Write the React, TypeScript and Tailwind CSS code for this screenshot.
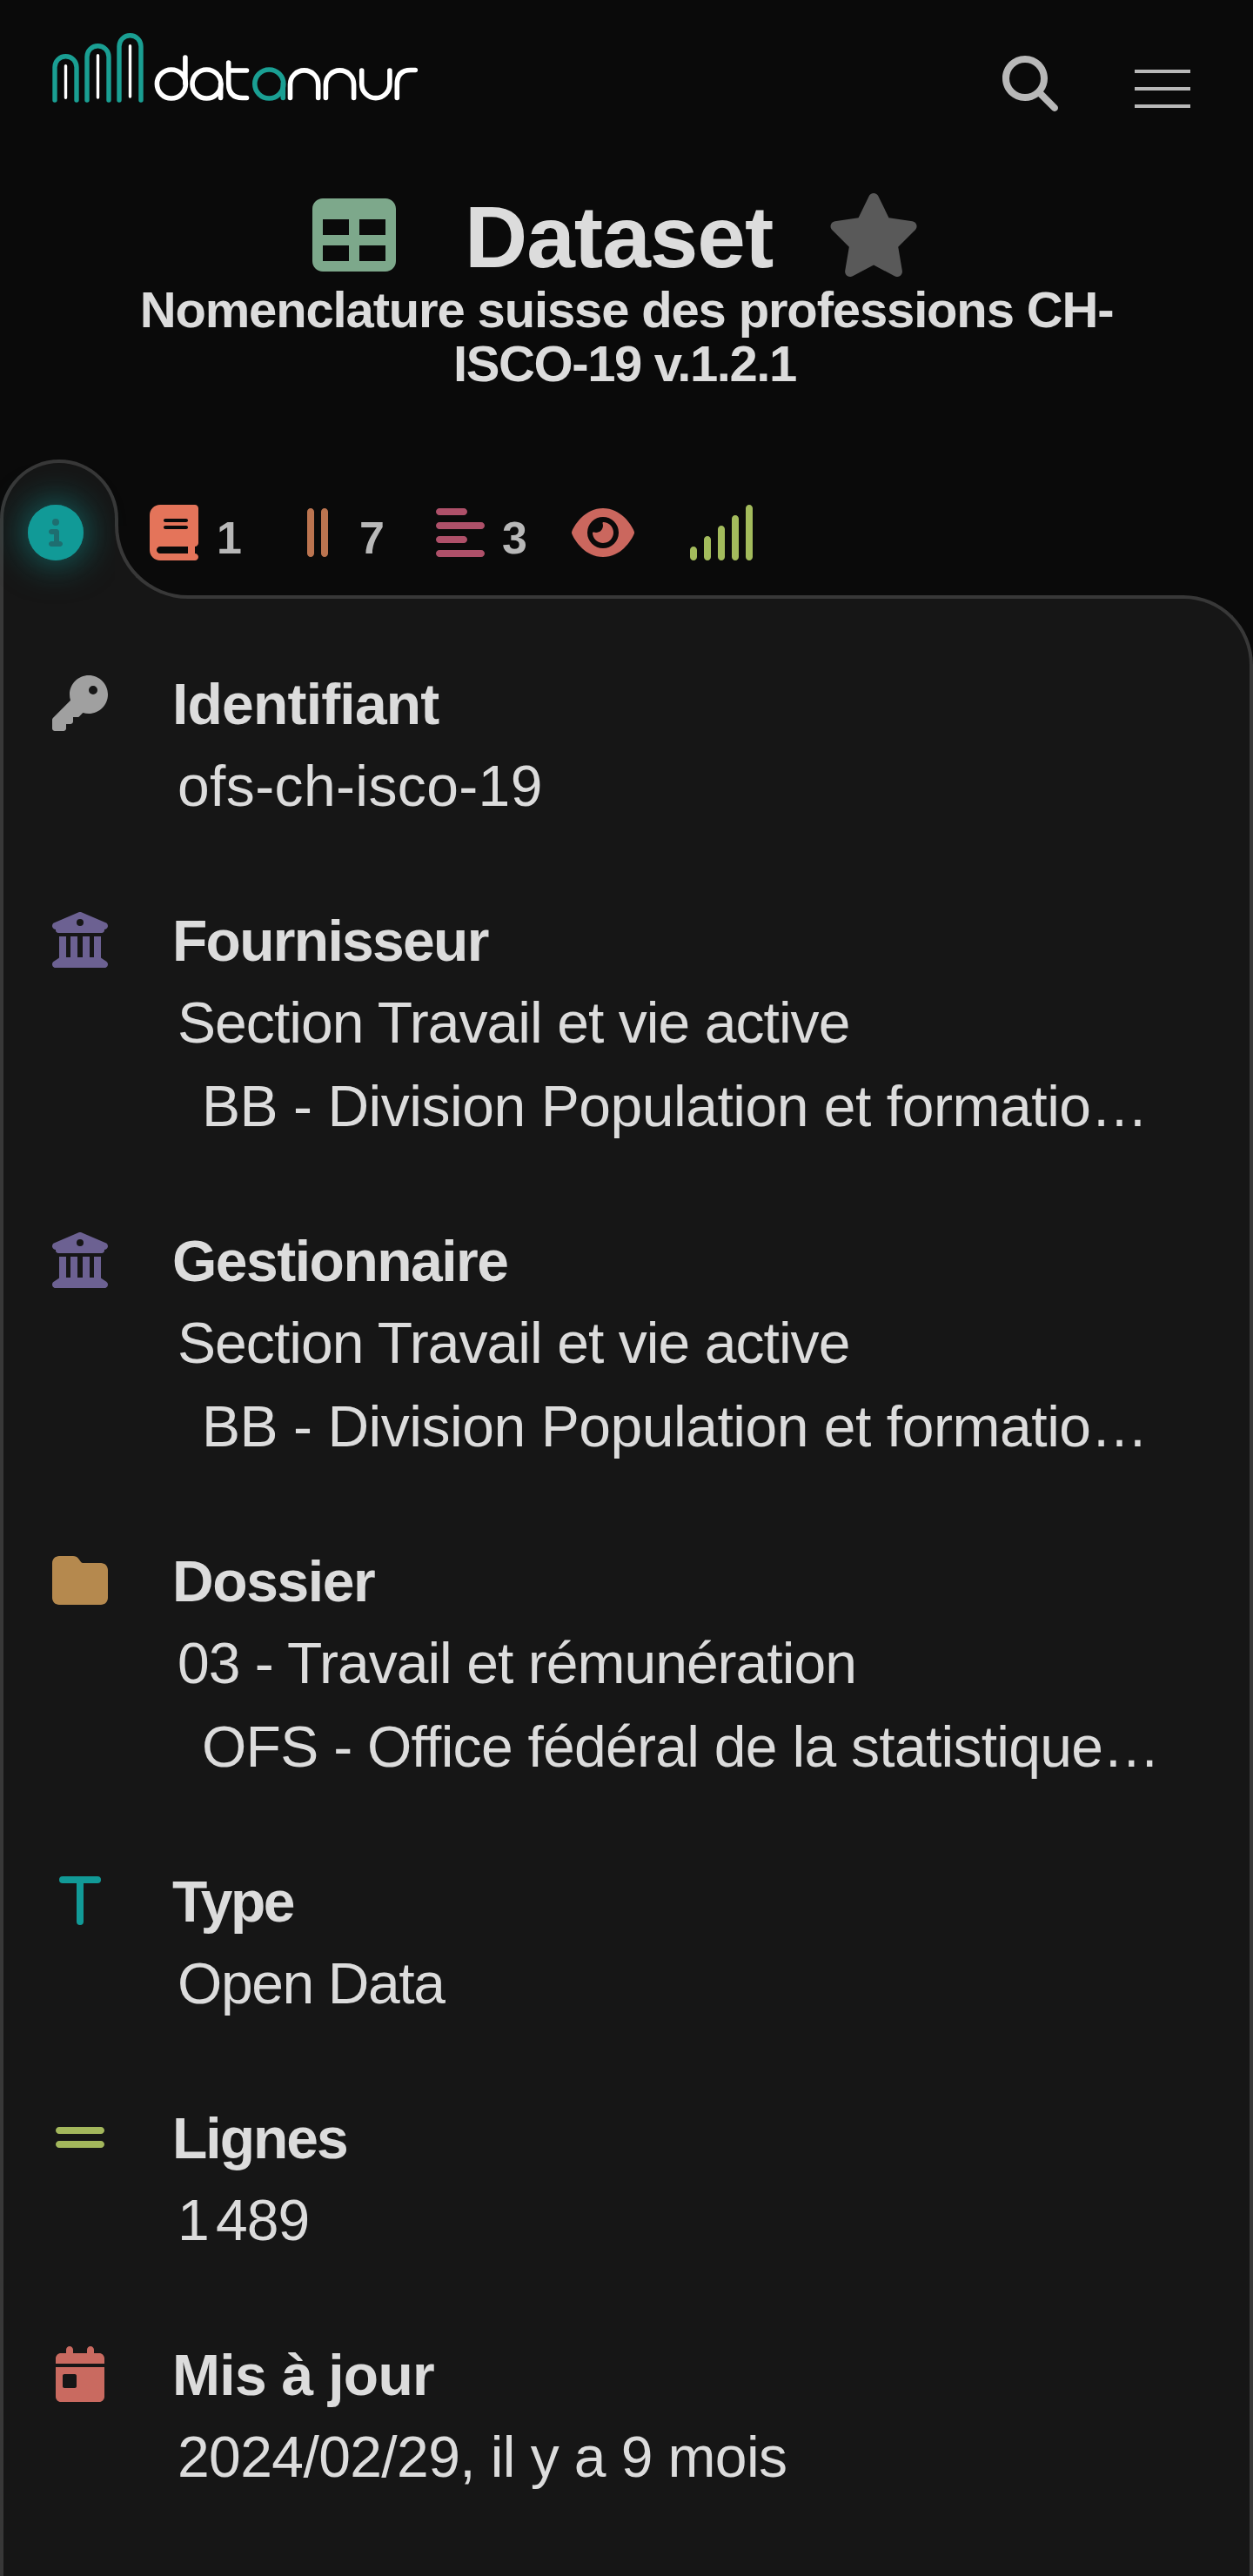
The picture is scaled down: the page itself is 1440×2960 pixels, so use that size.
import type { ReactNode } from "react";
import {
  FaAlignLeft,
  FaBook,
  FaBuildingColumns,
  FaCalendarDay,
  FaCircleInfo,
  FaEye,
  FaFolder,
  FaGripLines,
  FaGripLinesVertical,
  FaKey,
  FaMagnifyingGlass,
  FaSignal,
  FaStar,
  FaTable,
} from "react-icons/fa6";

function Logo() {
  return (
    <svg className="block h-[84px] w-[430px]" viewBox="0 0 430 84" fill="none" strokeLinecap="round">
      <g stroke="#1a9f93" strokeWidth="5.4">
        <path d="M5 79V41.200a12.500 12.500 0 0 1 25 0V79" />
        <path d="M42 79V29.200a12.500 12.500 0 0 1 25 0V79" />
        <path d="M79 79V17.200a12.500 12.500 0 0 1 25 0V79" />
      </g>
      <path d="M17.500 39.700V76.300M54.500 27.700V76M91.500 16.700V75" stroke="#fff" strokeWidth="3.400" />
      <g stroke="#fff" strokeWidth="5.600">
        <circle cx="138.900" cy="60.500" r="16.500" />
        <path d="M154.900 60V30" />
        <circle cx="179.500" cy="60.500" r="16.500" />
        <path d="M195.600 60V76.500" />
        <path d="M204.700 36V60q0 16.500 16 16.500H225.500M204.700 45H225.500" />
        <path d="M275.500 76.500V61a16.100 16.100 0 0 1 32.200 0V76.500" />
        <path d="M316.400 76.500V61a16.100 16.100 0 0 1 32.200 0V76.500" />
        <path d="M357.700 45V60.500a16.100 16.100 0 0 0 32.200 0V45" />
        <path d="M398.300 76.500V61Q398.300 44.500 414 44.500H419.300" />
      </g>
      <g stroke="#1a9f93" strokeWidth="5.600">
        <circle cx="251.300" cy="60.500" r="16.500" />
        <path d="M267.300 60V76.500" />
      </g>
    </svg>
  );
}

function TypeIcon() {
  return (
    <svg className="size-16" viewBox="0 0 64 64" fill="none" stroke="#119a97" strokeWidth="8" strokeLinecap="round">
      <path d="M12 8H52M32 8V56" />
    </svg>
  );
}

function Row({ icon, title, children }: { icon: ReactNode; title: ReactNode; children: ReactNode }) {
  return (
    <section className="flex pb-20">
      <div className="w-[138px] shrink-0 pt-[14px] text-[64px]">{icon}</div>
      <div className="min-w-0 flex-1 text-[66px] whitespace-nowrap">
        <h2 className="flex h-[93px] items-center pt-px font-bold">{title}</h2>
        <div className="pb-[3px]">{children}</div>
      </div>
    </section>
  );
}

function Line({ tracking, nested, children }: { tracking: string; nested?: boolean; children: ReactNode }) {
  return (
    <p className={`flex h-24 items-center ${nested ? "pl-[34px]" : "pl-[6px]"}`}>
      <span className={tracking}>{children}</span>
    </p>
  );
}

function Provider() {
  return (
    <>
      <Line tracking="tracking-[-0.94px]">Section Travail et vie active</Line>
      <Line nested tracking="tracking-[-0.46px]">BB - Division Population et formatio…</Line>
    </>
  );
}

function Tabs() {
  return (
    <nav className="relative z-10 -mb-1 flex h-[160px] items-start text-[52px] font-bold text-[#b8b8b8]">
      <div className="relative h-[160px] w-[136px] shrink-0">
        <div className="h-[160px] w-[136px] rounded-t-[68px] border-4 border-b-0 border-[#383838] bg-[#161616] pt-12 pl-7">
          <span className="block size-16 rounded-full bg-[#1e6e70] shadow-[0_0_40px_4px_rgba(17,154,151,0.6)]">
            <FaCircleInfo className="size-16 text-[#119a97]" />
          </span>
        </div>
        <div className="absolute bottom-0 left-[132px] size-[84px] bg-[#161616]">
          <div className="size-full rounded-bl-[84px] border-b-4 border-l-4 border-[#383838] bg-[#0a0a0a]" />
        </div>
      </div>
      <div className="relative mt-[52px] flex h-16 items-center pl-9">
        <FaBook className="h-16 w-14 text-[#e4745a]" />
        <span className="ml-[21px] w-[104px] pt-3">1</span>
        <FaGripLinesVertical className="h-16 w-6 text-[#bb7450]" />
        <span className="ml-[36px] w-[88px] pt-3">7</span>
        <FaAlignLeft className="h-16 w-14 text-[#ae5069]" />
        <span className="ml-[20px] w-[80px] pt-3">3</span>
        <FaEye className="h-16 w-[72px] text-[#cb675e]" />
        <FaSignal className="ml-[60px] h-16 w-20 text-[#a3bb5c]" />
      </div>
    </nav>
  );
}

export default function App() {
  return (
    <div className="flex h-[2960px] w-[1440px] flex-col overflow-hidden bg-[#0a0a0a] font-['Liberation_Sans',Arial,sans-serif] leading-none text-[#dcdcdc]">
      <header className="flex h-[200px] shrink-0 items-start justify-between pt-9 pr-[72px] pl-[58px]">
        <Logo />
        <div className="flex gap-[88px] pt-7">
          <FaMagnifyingGlass className="size-16 text-[#b8b8b8]" />
          <div className="flex flex-col gap-4 pt-4">
            <span className="h-1 w-16 bg-[#b8b8b8]" />
            <span className="h-1 w-16 bg-[#b8b8b8]" />
            <span className="h-1 w-16 bg-[#b8b8b8]" />
          </div>
        </div>
      </header>

      <div className="flex h-[125px] shrink-0 items-start pt-[22px] pl-[359px]">
        <FaTable className="size-24 text-[#7da88b]" />
        <h1 className="ml-[79px] w-[416px] text-[100px] font-bold tracking-[-1px]">Dataset</h1>
        <FaStar className="h-24 w-[108px] text-[#595959]" />
      </div>
      <div className="flex h-[203px] shrink-0 flex-col items-center text-[58px] leading-[62px] font-bold whitespace-nowrap">
        <span className="tracking-[-1.150px]">Nomenclature suisse des professions CH-</span>
        <span className="pr-1 tracking-[-1.400px]">ISCO-19 v.1.2.1</span>
      </div>

      <Tabs />
      <main className="min-h-0 flex-1 rounded-tr-[80px] border-4 border-b-0 border-[#383838] bg-[#161616] pt-[74px] pl-14">
        <Row icon={<FaKey className="text-[#a0a0a0]" />} title={<span className="tracking-[-0.8px]">Identifiant</span>}>
          <Line tracking="tracking-[0.38px]">ofs-ch-isco-19</Line>
        </Row>
        <Row icon={<FaBuildingColumns className="text-[#6c6192]" />} title={<span className="tracking-[-1.7px]">Fournisseur</span>}>
          <Provider />
        </Row>
        <Row icon={<FaBuildingColumns className="text-[#6c6192]" />} title={<span className="tracking-[-1.5px]">Gestionnaire</span>}>
          <Provider />
        </Row>
        <Row icon={<FaFolder className="text-[#b5894e]" />} title={<span className="tracking-[-1.4px]">Dossier</span>}>
          <Line tracking="tracking-[-0.97px]">03 - Travail et rémunération</Line>
          <Line nested tracking="tracking-[-0.72px]">OFS - Office fédéral de la statistique…</Line>
        </Row>
        <Row icon={<TypeIcon />} title={<span className="tracking-[-2.6px]">Type</span>}>
          <Line tracking="tracking-[-1.4px]">Open Data</Line>
        </Row>
        <Row icon={<FaGripLines className="text-[#a3b75c]" />} title={<span className="tracking-[-2px]">Lignes</span>}>
          <Line tracking="tracking-[-1px] [word-spacing:-9px]">1 489</Line>
        </Row>
        <Row icon={<FaCalendarDay className="text-[#c96a60]" />} title={<span className="tracking-[-0.7px]">Mis à jour</span>}>
          <Line tracking="tracking-[-0.6px]">2024/02/29, il y a 9 mois</Line>
        </Row>
      </main>
    </div>
  );
}
